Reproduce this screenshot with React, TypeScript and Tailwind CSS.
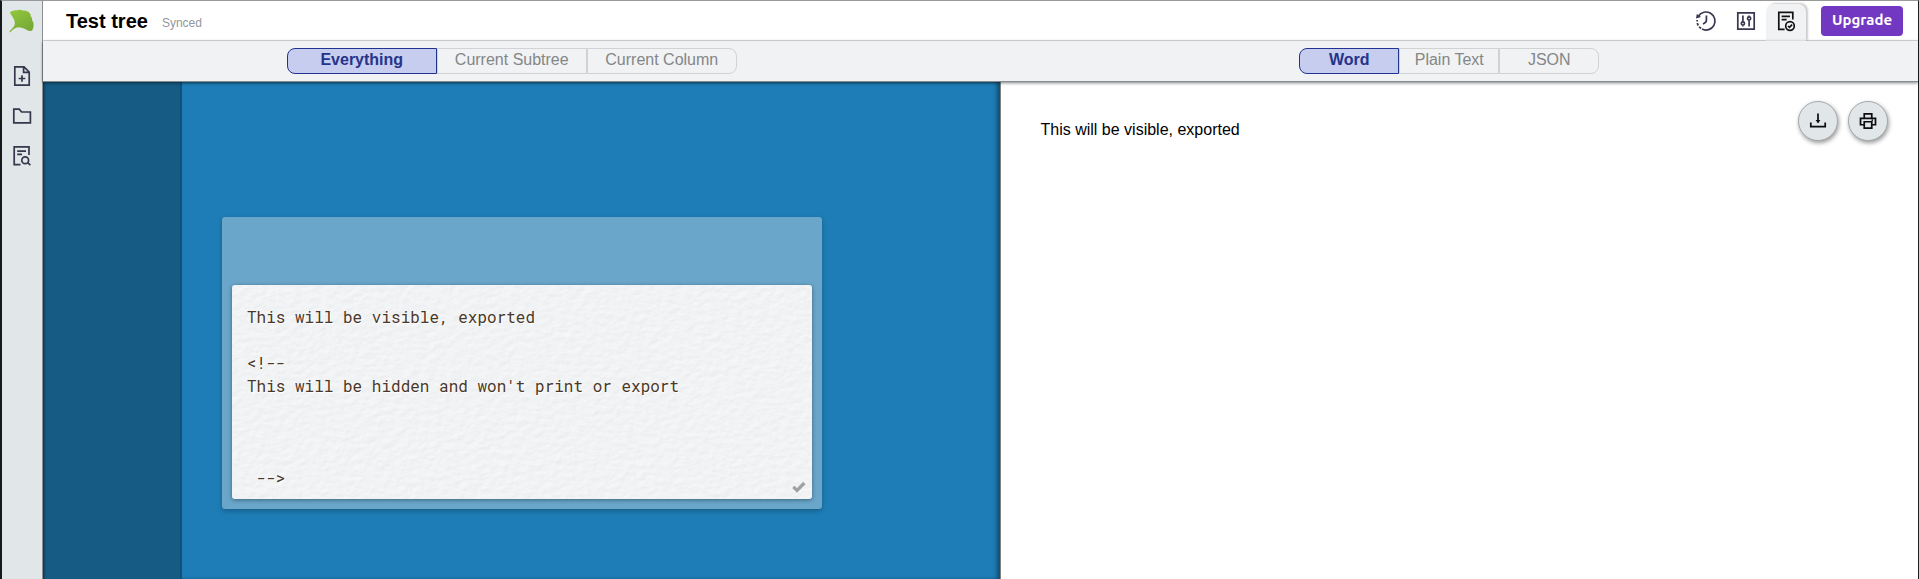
import { useState } from "react";
import type { ReactNode } from "react";

const draft =
  "This will be visible, exported\n\n<!--\nThis will be hidden and won't print or export\n\n\n\n -->";

function Icon({ children, className = "size-6" }: { children: ReactNode; className?: string }) {
  return (
    <svg
      viewBox="0 0 24 24"
      fill="none"
      stroke="currentColor"
      strokeWidth="1.7"
      aria-hidden="true"
      className={className}
    >
      {children}
    </svg>
  );
}

function Logo() {
  return (
    <svg viewBox="0 0 26 26" className="size-[26px]" aria-hidden="true">
      <defs>
        <linearGradient id="leaf" x1="0" y1="0" x2="0.6" y2="1">
          <stop offset="0" stopColor="#93c83e" />
          <stop offset="1" stopColor="#76a935" />
        </linearGradient>
      </defs>
      <path
        fill="url(#leaf)"
        d="M0.8 4.4 C3 2.6 5.4 2.2 8 2.2 L11 1.8 L14 2.4 L15.4 2.8 L16.2 2.2 L18 3.4 L19.6 3.6 L20.2 5 L21.6 6 L21.6 8 L23 10 L23.2 12.4 L24.4 14.6 L24.6 18 L24 20.6 L23 22.8 L20 23 C16.5 21.5 13.5 19.2 10 19.2 C7 19.2 5 20.6 3 22.6 L1 24.6 L0.4 23.6 C2 21.4 4.4 19.8 5.4 17.6 C6.4 15 5.6 12.4 4.2 10 C3 8 2 6 0.8 4.4 Z"
      />
    </svg>
  );
}

function Segments({
  name,
  options,
  itemWidth,
}: {
  name: string;
  options: string[];
  itemWidth: string;
}) {
  const [selected, setSelected] = useState(options[0]);
  return (
    <div role="group" aria-label={name} className="flex h-[26px]">
      {options.map((option) => (
        <button
          key={option}
          type="button"
          aria-pressed={option === selected}
          onClick={() => setSelected(option)}
          className={`${itemWidth} border pb-0.5 text-base leading-none first:rounded-l-lg last:rounded-r-lg ${
            option === selected
              ? "border-[#203391] bg-[#c7cdee] font-bold text-[#25348a]"
              : "border-[#d0d2d4] text-[#848687] first:border-r-0"
          }`}
        >
          {option}
        </button>
      ))}
    </div>
  );
}

function PaperTexture() {
  return (
    <svg className="absolute inset-0 size-full rounded-[3px] opacity-30" aria-hidden="true">
      <filter id="paper" x="0" y="0" width="100%" height="100%" colorInterpolationFilters="sRGB">
        <feTurbulence type="fractalNoise" baseFrequency="0.12 0.18" numOctaves="3" seed="4" />
        <feDiffuseLighting surfaceScale="0.35" diffuseConstant="1.17" lightingColor="#fbfdff">
          <feDistantLight azimuth="235" elevation="55" />
        </feDiffuseLighting>
      </filter>
      <rect width="100%" height="100%" filter="url(#paper)" />
    </svg>
  );
}

export default function App() {
  const [text, setText] = useState(draft);
  return (
    <div className="flex min-h-screen border-t border-r border-l-2 border-t-[#999999] border-r-[#1b1d20] border-l-[#18191c] bg-white font-['Liberation_Sans',Arial,sans-serif]">
      <nav
        aria-label="Main"
        className="flex w-[41px] shrink-0 flex-col items-center border-r border-[#8a8e90] bg-[#e1e6e9] pt-[7px] text-[#37364d]"
      >
        <a href="#home" aria-label="Home">
          <Logo />
        </a>
        <div className="mt-[30px] flex flex-col gap-4">
          <button type="button" aria-label="New tree">
            <Icon>
              <path d="M4.8 2.8H14L19.2 8V21.2H4.8Z M13.6 3V8.4H19 M12 11.2V17.8 M8.7 14.5H15.3" />
            </Icon>
          </button>
          <button type="button" aria-label="Open tree">
            <Icon>
              <path d="M3.8 5.2H9.2L11.6 8H20.4V18.8H3.8Z" />
            </Icon>
          </button>
          <button type="button" aria-label="Search trees">
            <Icon>
              <path d="M10.5 20.6H4.2V2.8H19V11 M7.2 7.2H16 M7.2 10.4H12" />
              <circle cx="15.2" cy="16.2" r="3.4" />
              <path d="M17.6 18.6L20.4 21.2" />
            </Icon>
          </button>
        </div>
      </nav>

      <div className="flex min-w-0 flex-1 flex-col">
        <header className="flex h-10 items-center border-b border-[#dadbdd] pr-[15px] pl-[23px]">
          <h1 className="text-xl font-bold text-black">Test tree</h1>
          <span className="mt-1 ml-3.5 text-xs text-[#93969d]">Synced</span>
          <div className="ml-auto flex h-full items-center text-[#37364d]">
            <button type="button" aria-label="History" className="flex h-full w-10 items-center justify-center">
              <Icon>
                <path d="M4.4 7.2A9 9 0 1 1 8 20.1" />
                <path d="M8 20.1A9 9 0 0 1 3.2 11" strokeDasharray="2.6 1.5" strokeDashoffset="3" />
                <path d="M12.4 6.6V11.6Q12.4 13.6 9 15" />
                <path d="M2 9.4L2.8 5L7 8Z" fill="currentColor" stroke="none" />
              </Icon>
            </button>
            <button type="button" aria-label="Settings" className="flex h-full w-10 items-center justify-center">
              <Icon>
                <path d="M3.8 3.8H20.2V20.2H3.8Z M8.9 6.4V12.6 M8.9 16.4V17.6 M15.1 6.4V7.6 M15.1 11.2V17.6" />
                <circle cx="8.9" cy="14.4" r="1.6" />
                <circle cx="15.1" cy="9.4" r="1.6" />
              </Icon>
            </button>
            <button
              type="button"
              aria-label="Export"
              aria-pressed="true"
              className="mt-[3px] -mb-px flex w-10 items-center justify-center self-stretch rounded-t-lg bg-[#f0f2f4] pb-1 text-[#121212] shadow-[2px_-1px_2px_rgba(0,0,0,0.2)] [clip-path:inset(-4px_-4px_0_-4px)]"
            >
              <Icon>
                <path d="M10.6 20.4H4.8V3.4H18.8V10.4 M7.6 7.4H16 M7.6 10.6H12.6" />
                <circle cx="16" cy="17" r="4.3" />
                <path d="M14 17L15.5 18.4L18.1 15.6" />
              </Icon>
            </button>
            <button
              type="button"
              className="ml-[15px] h-[30px] w-[82px] rounded bg-[#7338c1] pb-0.5 font-['Ubuntu','Noto_Sans',sans-serif] text-[15px] leading-none font-bold text-white"
            >
              Upgrade
            </button>
          </div>
        </header>

        <div className="relative z-10 grid h-[41px] grid-cols-2 items-center justify-items-center border-b border-[#868b90] bg-[#f0f2f4] pb-px shadow-[0_1px_3px_rgba(0,0,0,0.5)]">
          <Segments
            name="Export selection"
            options={["Everything", "Current Subtree", "Current Column"]}
            itemWidth="w-[150px]"
          />
          <Segments name="Export format" options={["Word", "Plain Text", "JSON"]} itemWidth="w-[100px]" />
        </div>

        <div className="flex flex-1">
          <main className="flex w-[calc(50%+20px)] shrink-0 border-r border-[#7d8184] bg-[#1e7db6] shadow-[inset_-4px_0_4px_-1px_rgba(0,0,0,0.4)]">
            <div className="w-[139px] shrink-0 border-r-2 border-[#134f76] bg-[#155b84] shadow-[inset_3px_0_3px_-2px_rgba(0,0,0,0.5)]" />
            <div className="min-w-0 flex-1 px-10 pt-[135px]">
              <div className="max-w-[600px] rounded-[3px] bg-[#69a6ca] px-2.5 pt-[68px] pb-2.5 shadow-[0_2px_5px_rgba(0,0,0,0.25)]">
                <div className="relative rounded-[3px] bg-[#f1f3f5] shadow-[0_1px_4px_rgba(0,0,0,0.4)]">
                  <PaperTexture />
                  <textarea
                    aria-label="Card text"
                    rows={8}
                    spellCheck={false}
                    value={text}
                    onChange={(e) => setText(e.target.value)}
                    className="relative block w-full resize-none overflow-hidden bg-transparent px-[15px] pt-5 pb-2.5 font-['Roboto_Mono','Liberation_Mono',monospace] text-base leading-[23px] text-[#4a3728] outline-none [text-shadow:1px_1px_0_#ffffff]"
                  />
                  <svg
                    viewBox="0 0 14 12"
                    className="absolute right-1.5 bottom-1.5 h-3 w-3.5"
                    fill="none"
                    stroke="#a0a1a2"
                    strokeWidth="3.2"
                    aria-hidden="true"
                  >
                    <path d="M1.3 5.8L5 9.4L12.4 2" />
                  </svg>
                </div>
              </div>
            </div>
          </main>

          <section
            aria-label="Export preview"
            className="flex min-w-0 flex-1 items-start justify-between bg-white pt-[19px] pr-[30px] pl-10"
          >
            <p className="mt-[17px] text-base text-black">This will be visible, exported</p>
            <div className="flex gap-2.5 text-[#0d0d0d]">
              <button
                type="button"
                aria-label="Download"
                className="flex size-10 items-center justify-center rounded-full border border-[#a5aaad] bg-[#e1e6e9] shadow-[1px_2px_4px_rgba(0,0,0,0.4)]"
              >
                <Icon className="size-[18px]">
                  <path d="M2.4 14V19.4H21.6V14 M12 2V14" strokeWidth="2.3" />
                  <path d="M8.8 10.6H15.2L12 15Z" fill="currentColor" stroke="none" />
                </Icon>
              </button>
              <button
                type="button"
                aria-label="Print"
                className="flex size-10 items-center justify-center rounded-full border border-[#a5aaad] bg-[#e1e6e9] shadow-[1px_2px_4px_rgba(0,0,0,0.4)]"
              >
                <Icon className="size-[18px]">
                  <path
                    d="M7 8V2.4H17V8 M7 17H2V8.4H22V17H17 M7 13H17V21.6H7Z M16.8 11H18.6"
                    strokeWidth="2.3"
                  />
                </Icon>
              </button>
            </div>
          </section>
        </div>
      </div>
    </div>
  );
}
